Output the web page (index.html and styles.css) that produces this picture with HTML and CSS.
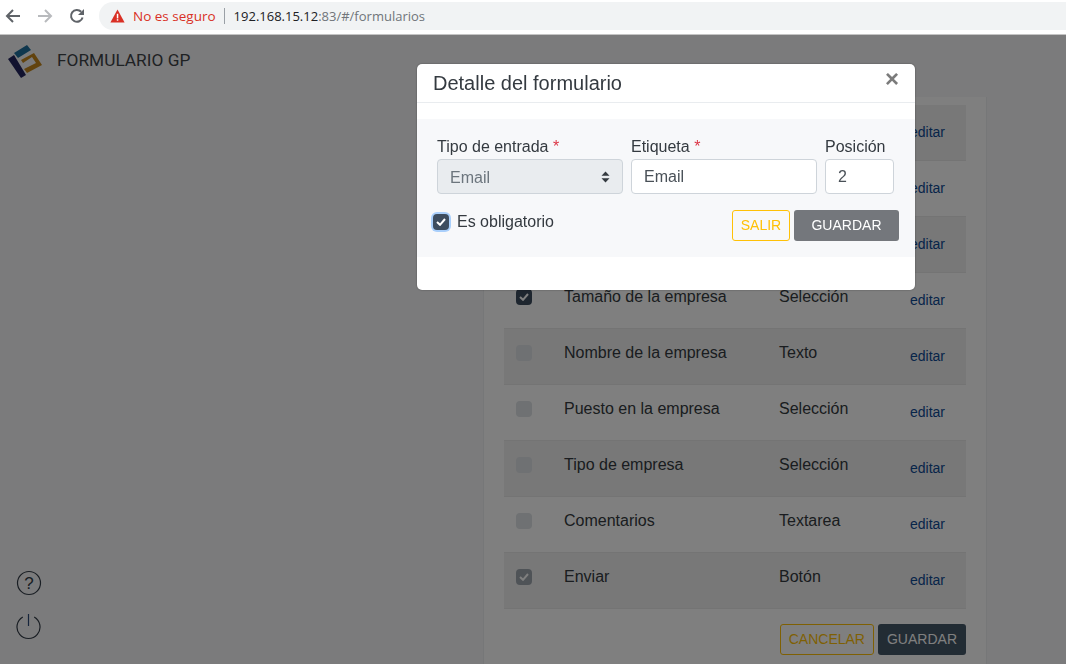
FILE: index.html
```html
<!DOCTYPE html>
<html lang="en">
<head>
    <meta charset="UTF-8">
    <meta name="viewport" content="width=device-width, initial-scale=1.0">
    <title>Formulario GP</title>
    <link rel="stylesheet" href="styles.css">
</head>
<body>
    <!-- browser toolbar -->
    <div class="toolbar">
        <svg class="nav-icon" width="16" height="16" viewBox="0 0 16 16"><path d="M15 8H2M8 2L2 8l6 6" fill="none" stroke="#5f6368" stroke-width="2"/></svg>
        <svg class="nav-icon" width="16" height="16" viewBox="0 0 16 16"><path d="M1 8h13M8 2l6 6-6 6" fill="none" stroke="#b8babd" stroke-width="2"/></svg>
        <svg class="nav-icon" width="16" height="16" viewBox="0 0 16 16"><path d="M13.6 9.5A5.9 5.9 0 1 1 12.2 3.8" fill="none" stroke="#5f6368" stroke-width="2"/><path d="M15 1v6H9z" fill="#5f6368"/></svg>
        <div class="omnibox">
            <svg width="15" height="14" viewBox="0 0 15 14"><path d="M7.5 0.5L14.6 13.5H0.4z" fill="#d93025"/><rect x="6.8" y="4.8" width="1.5" height="4.6" fill="#fff"/><rect x="6.8" y="10.2" width="1.5" height="1.5" fill="#fff"/></svg>
            <span class="not-secure">No es seguro</span>
            <span class="omni-sep"></span>
            <span class="url">192.168.15.12<span class="url-rest">:83/#/formularios</span></span>
        </div>
    </div>

    <div class="app">
        <aside class="sidebar">
            <div class="brand">
                <svg width="36" height="36" viewBox="0 0 36 36">
                    <path d="M6 9L19 1l4 5-13 8z" fill="#1e6f9c"/>
                    <path d="M0 15L6 11 18 31l-5 3z" fill="#23255f"/>
                    <path d="M13 16L26 9l8 12-15 8-3-4 12-6-4-6-9 6z" fill="#c4861c"/>
                </svg>
                <span class="brand-name">FORMULARIO GP</span>
            </div>
            <div class="side-icons">
                <svg width="26" height="26" viewBox="0 0 26 26"><circle cx="13" cy="13" r="11.500" fill="none" stroke="#333c48" stroke-width="1.200"/><text x="13" y="19" text-anchor="middle" class="help-mark">?</text></svg>
                <svg width="26" height="28" viewBox="0 0 26 28"><path d="M6.800 5a11.500 11.500 0 1 0 11.400 0" fill="none" stroke="#333c48" stroke-width="1.200"/><path d="M12.500 2v12" stroke="#2c4a78" stroke-width="1.200"/></svg>
            </div>
        </aside>

        <main class="main">
            <div class="card">
                <div class="row striped"><span class="box"></span><span class="name">Nombre</span><span class="kind">Texto</span><a class="edit">editar</a></div>
                <div class="row"><span class="box"></span><span class="name">Apellido</span><span class="kind">Texto</span><a class="edit">editar</a></div>
                <div class="row striped"><span class="box"></span><span class="name">Email</span><span class="kind">Email</span><a class="edit">editar</a></div>
                <div class="row">
                    <span class="box checked"><svg width="10" height="8" viewBox="0 0 10 8"><path d="M1 4l3 2.800L9 1" fill="none" stroke="#fff" stroke-width="2"/></svg></span>
                    <span class="name">Tamaño de la empresa</span><span class="kind">Selección</span><a class="edit">editar</a>
                </div>
                <div class="row striped"><span class="box"></span><span class="name">Nombre de la empresa</span><span class="kind">Texto</span><a class="edit">editar</a></div>
                <div class="row"><span class="box"></span><span class="name">Puesto en la empresa</span><span class="kind">Selección</span><a class="edit">editar</a></div>
                <div class="row striped"><span class="box"></span><span class="name">Tipo de empresa</span><span class="kind">Selección</span><a class="edit">editar</a></div>
                <div class="row"><span class="box"></span><span class="name">Comentarios</span><span class="kind">Textarea</span><a class="edit">editar</a></div>
                <div class="row striped">
                    <span class="box checked muted"><svg width="10" height="8" viewBox="0 0 10 8"><path d="M1 4l3 2.800L9 1" fill="none" stroke="#fff" stroke-width="2"/></svg></span>
                    <span class="name">Enviar</span><span class="kind">Botón</span><a class="edit">editar</a>
                </div>
                <div class="card-actions">
                    <button class="btn btn-outline">CANCELAR</button>
                    <button class="btn btn-dark">GUARDAR</button>
                </div>
            </div>
        </main>
    </div>

    <div class="backdrop"></div>

    <div class="modal">
        <div class="modal-header">
            <h2>Detalle del formulario</h2>
            <span class="close">&times;</span>
        </div>
        <div class="modal-panel">
            <div class="fields">
                <div class="field field-type">
                    <label>Tipo de entrada <span class="req">*</span></label>
                    <div class="control control-disabled">
                        <span>Email</span>
                        <svg width="9" height="12" viewBox="0 0 9 12"><path d="M4.500 0.500L8.500 4.800H0.500zM4.500 11.500L8.500 7.200H0.500z" fill="#343a40"/></svg>
                    </div>
                </div>
                <div class="field field-label">
                    <label>Etiqueta <span class="req">*</span></label>
                    <div class="control"><span>Email</span></div>
                </div>
                <div class="field field-pos">
                    <label>Posición</label>
                    <div class="control"><span>2</span></div>
                </div>
            </div>
            <div class="panel-foot">
                <div class="required-check">
                    <span class="modal-box"><svg width="10" height="8" viewBox="0 0 10 8"><path d="M1 4l3 2.800L9 1" fill="none" stroke="#fff" stroke-width="2"/></svg></span>
                    <span>Es obligatorio</span>
                </div>
                <div class="panel-actions">
                    <button class="btn btn-outline btn-exit">SALIR</button>
                    <button class="btn btn-grey">GUARDAR</button>
                </div>
            </div>
        </div>
    </div>
</body>
</html>
```

FILE: styles.css
```css
* {
    box-sizing: border-box;
}
html, body {
    height: 100%;
}
body {
    margin: 0;
    overflow: hidden;
    font-family: "Liberation Sans", Arial, sans-serif;
    font-size: 16px;
    color: #343a40;
    background-color: #fff;
}

/* browser toolbar */
.toolbar {
    display: flex;
    align-items: center;
    height: 35px;
    padding: 0 0 2px 5px;
    background-color: #fff;
    border-bottom: 1px solid #c4c4c4;
}
.nav-icon {
    margin-right: 16px;
}
.omnibox {
    display: flex;
    align-items: center;
    flex: 1;
    height: 28px;
    margin-left: -2px;
    padding-left: 11px;
    border-radius: 14px 0 0 14px;
    background-color: #f1f3f4;
    font-family: "Open Sans", sans-serif;
    font-size: 13px;
}
.not-secure {
    margin-left: 8px;
    font-size: 13.500px;
    color: #d93025;
}
.omni-sep {
    width: 1px;
    height: 16px;
    margin: 0 9px 0 8px;
    background-color: #9aa0a6;
}
.url {
    color: #202124;
}
.url-rest {
    color: #70757a;
}

/* page */
.app {
    display: flex;
    height: 629px;
    background-color: #f7f7f8;
}
.sidebar {
    display: flex;
    flex-direction: column;
    justify-content: space-between;
    width: 483px;
    padding: 9px 0 24px 8px;
}
.brand {
    display: flex;
    align-items: flex-start;
}
.brand svg {
    flex-shrink: 0;
}
.brand-name {
    margin: 6px 0 0 13px;
    font-family: Roboto, sans-serif;
    font-size: 17.300px;
    color: #3f4449;
}
.side-icons {
    display: flex;
    flex-direction: column;
    gap: 16px;
    padding-left: 8px;
}
.help-mark {
    font-family: "Liberation Sans", sans-serif;
    font-size: 17px;
    fill: #333c48;
}
.main {
    flex: 1;
    padding: 62px 79px 0 0;
}
.card {
    height: 100%;
    padding: 8px 20px 0;
    background-color: #fff;
    border-left: 1px solid #eceef0;
    border-right: 1px solid #eceef0;
}
.row {
    display: flex;
    height: 56px;
    padding-top: 18px;
    border-bottom: 1px solid #e8e8e8;
    font-size: 16px;
}
.row:last-of-type {
    border-bottom: none;
}
.striped {
    background-color: #f0f0f0;
}
.box {
    display: flex;
    align-items: center;
    justify-content: center;
    flex-shrink: 0;
    width: 16px;
    height: 16px;
    margin: -2px 32px 0 12px;
    border-radius: 4px;
    background-color: #dee2e6;
}
.checked {
    background-color: #3d4d5f;
}
.muted {
    background-color: #9ea6ae;
}
.name {
    width: 215px;
    margin-top: -3px;
}
.kind {
    width: 131px;
    margin-top: -3px;
}
.edit {
    margin-top: 1px;
    font-size: 14px;
    color: #0e4a94;
}
.card-actions {
    display: flex;
    justify-content: flex-end;
    gap: 4px;
    margin-top: 15px;
}
.btn {
    height: 31px;
    padding: 0 8px 2px;
    border-radius: 3px;
    border: 1px solid transparent;
    font-family: "Liberation Sans", Arial, sans-serif;
    font-size: 14px;
}
.btn-outline {
    background-color: transparent;
    border-color: #ffc107;
    color: #ffc107;
}
.btn-dark {
    background-color: #445868;
    color: #fff;
}
.btn-grey {
    width: 105px;
    background-color: #74777c;
    color: #fff;
}
.btn-exit {
    width: 58px;
    padding: 0 0 2px;
}

/* modal */
.backdrop {
    position: fixed;
    top: 35px;
    left: 0;
    right: 0;
    bottom: 0;
    background-color: rgba(0, 0, 0, 0.5);
}
.modal {
    position: fixed;
    top: 64px;
    left: 417px;
    width: 498px;
    height: 226px;
    background-color: #fff;
    border-radius: 5px;
    box-shadow: 0 0 2px rgba(0, 0, 0, 0.4);
}
.modal-header {
    display: flex;
    justify-content: space-between;
    height: 39px;
    padding: 7px 16px 0;
    border-bottom: 1px solid #e9ecef;
}
.modal-header h2 {
    margin: 0;
    font-size: 20px;
    font-weight: 400;
    line-height: 24px;
}
.close {
    margin: -4px 0 0 0;
    font-size: 24px;
    font-weight: 700;
    line-height: 24px;
    color: #7b7b7b;
}
.modal-panel {
    height: 138px;
    margin-top: 16px;
    padding: 17px 16px 0 20px;
    background-color: #f7f8fa;
}
.fields {
    display: flex;
    gap: 8px;
}
.field label {
    display: block;
    height: 23px;
    padding-top: 1px;
    line-height: 20px;
}
.field-type {
    width: 186px;
}
.field-label {
    width: 186px;
}
.field-pos {
    width: 69px;
}
.req {
    color: #dc3545;
}
.control {
    display: flex;
    align-items: center;
    justify-content: space-between;
    height: 35px;
    padding: 0 12px;
    border: 1px solid #ced4da;
    border-radius: 4px;
    background-color: #fff;
    color: #495057;
}
.control span {
    margin-top: 1px;
}
.control-disabled {
    background-color: #e9ecef;
    color: #6c757d;
}
.control-disabled span {
    margin-top: 2px;
}
.panel-foot {
    display: flex;
    justify-content: space-between;
    margin: 16px 0 0 -4px;
}
.required-check {
    display: flex;
    align-items: flex-start;
    gap: 8px;
    padding-top: 3px;
}
.modal-box {
    display: flex;
    align-items: center;
    justify-content: center;
    width: 16px;
    height: 16px;
    margin-top: 1px;
    border-radius: 4px;
    background-color: #3d4d5f;
    box-shadow: 0 0 0 2px #a9cffb;
}
.panel-actions {
    display: flex;
    gap: 4px;
}
```
